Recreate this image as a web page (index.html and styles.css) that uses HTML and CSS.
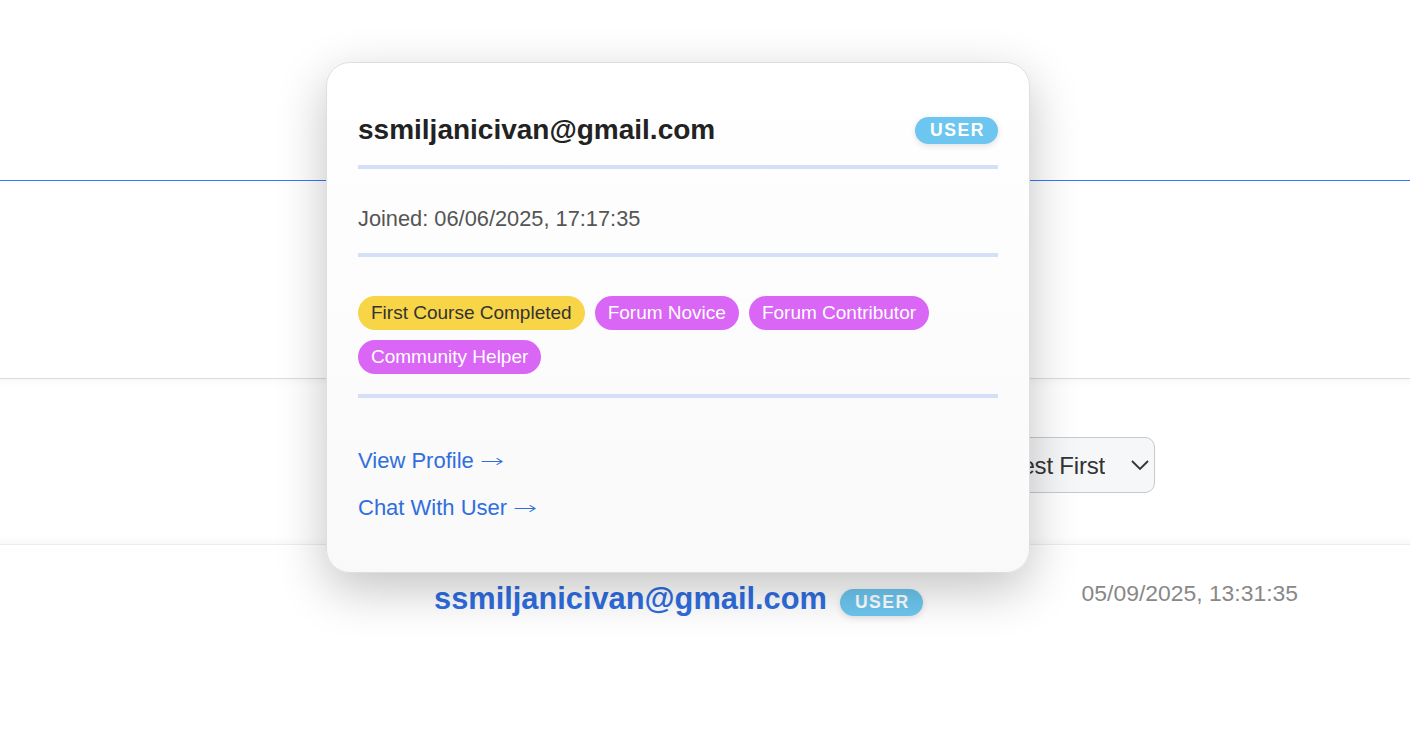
FILE: index.html
```html
<!DOCTYPE html>
<html lang="en">
<head>
<meta charset="utf-8">
<title>User</title>
<link rel="stylesheet" href="styles.css">
</head>
<body>
<header class="top-bar"></header>
<section class="hero"></section>
<section class="filters">
  <div class="select-wrap">
    <select class="sort-select">
      <option>Newest First</option>
    </select>
    <svg class="chev" width="20" height="12" viewBox="0 0 20 12"><polyline points="2,2 10,10 18,2" fill="none" stroke="#333" stroke-width="1.8"/></svg>
  </div>
</section>
<section class="row">
  <div class="row-user">
    <a class="row-email" href="#">ssmiljanicivan@gmail.com</a>
    <span class="role-badge row-badge">USER</span>
  </div>
  <div class="row-date">05/09/2025, 13:31:35</div>
</section>

<div class="popup">
  <div class="pop-head">
    <span class="pop-email">ssmiljanicivan@gmail.com</span>
    <span class="role-badge">USER</span>
  </div>
  <div class="pop-joined">Joined: 06/06/2025, 17:17:35</div>
  <div class="pop-badges">
    <span class="ach ach-gold">First Course Completed</span>
    <span class="ach ach-purple">Forum Novice</span>
    <span class="ach ach-purple">Forum Contributor</span>
    <span class="ach ach-purple">Community Helper</span>
  </div>
  <div class="pop-links">
    <a href="#" class="pop-link">View Profile <span class="arrow">→</span></a>
    <a href="#" class="pop-link">Chat With User <span class="arrow">→</span></a>
  </div>
</div>
</body>
</html>
```
FILE: styles.css
```css
html, body {
  margin: 0;
  padding: 0;
  background: #ffffff;
  font-family: "Liberation Sans", Arial, Helvetica, sans-serif;
}

.top-bar {
  height: 180px;
  border-bottom: 1px solid #3479f5;
}

.hero {
  height: 197px;
}

.filters {
  height: 167px;
  border-top: 1px solid #dcdcdc;
  border-bottom: 1px solid #ececec;
  box-shadow: inset 0 8px 10px -8px rgba(0,0,0,0.06), inset 0 -10px 12px -10px rgba(0,0,0,0.05);
  display: flex;
  justify-content: flex-end;
  padding-right: 255px;
  box-sizing: border-box;
  padding-top: 58px;
}

.select-wrap {
  position: relative;
  width: 200px;
  height: 56px;
}

.sort-select {
  appearance: none;
  -webkit-appearance: none;
  width: 200px;
  height: 56px;
  border: 1px solid #c9c9c9;
  border-radius: 10px;
  background: #f6f7f9;
  font-family: "Liberation Sans", Arial, sans-serif;
  font-size: 24px;
  color: #333;
  padding: 0 49px 0 16px;
  text-align: right;
  letter-spacing: -0.2px;
}

.chev {
  position: absolute;
  right: 5px;
  top: 22px;
  pointer-events: none;
}

.row {
  display: flex;
  align-items: flex-start;
  padding: 36px 112px 0 434px;
  height: 160px;
  box-sizing: border-box;
}

.row-user {
  display: flex;
  align-items: center;
  gap: 13px;
  height: 36px;
}

.row-email {
  font-size: 30.8px;
  font-weight: bold;
  color: #2f6ddf;
  text-decoration: none;
  line-height: 36px;
}

.row-badge {
  margin-top: 6px;
}

.row-date {
  margin-left: auto;
  font-size: 22.9px;
  line-height: 28px;
  color: #888888;
  margin-top: -2px;
}

.role-badge {
  display: inline-block;
  background: #6dc6ef;
  color: #ffffff;
  font-weight: bold;
  font-size: 17.6px;
  letter-spacing: 1.5px;
  line-height: 23px;
  padding: 2px 13px 2px 15px;
  border-radius: 999px;
  box-shadow: 0 2px 6px rgba(0,0,0,0.12);
}

.popup {
  position: absolute;
  left: 326px;
  top: 62px;
  width: 704px;
  box-sizing: border-box;
  border: 1px solid #dedede;
  border-radius: 24px;
  padding: 50px 31px 51px;
  background: linear-gradient(#ffffff, #f9f9f9);
  box-shadow: 0 16px 50px rgba(0,0,0,0.24);
}

.pop-head {
  display: flex;
  justify-content: space-between;
  align-items: center;
  height: 34px;
  padding-bottom: 18px;
  border-bottom: 4px solid #d3e0f8;
}

.pop-email {
  font-size: 28px;
  font-weight: bold;
  color: #222222;
  line-height: 34px;
}

.pop-joined {
  padding: 37px 0 21px;
  font-size: 21.8px;
  line-height: 26px;
  color: #555555;
  border-bottom: 4px solid #d3e0f8;
}

.pop-badges {
  display: flex;
  flex-wrap: wrap;
  gap: 10px 10px;
  padding: 39px 0 20px;
  border-bottom: 4px solid #d3e0f8;
}

.ach {
  display: inline-block;
  font-size: 19px;
  line-height: 22px;
  padding: 6px 13px;
  border-radius: 999px;
}

.ach-gold {
  background: #f8d447;
  color: #333333;
}

.ach-purple {
  background: #d966f5;
  color: #ffffff;
}

.pop-links {
  display: flex;
  flex-direction: column;
  align-items: flex-start;
  gap: 21px;
  padding-top: 50px;
}

.pop-link {
  font-size: 22px;
  line-height: 26px;
  color: #306ede;
  text-decoration: none;
}

.arrow {
  font-family: "DejaVu Sans", sans-serif;
  font-weight: 200;
  display: inline-block;
  font-size: 22px;
  transform: scale(1.3, 0.8);
  transform-origin: left center;
}
```
